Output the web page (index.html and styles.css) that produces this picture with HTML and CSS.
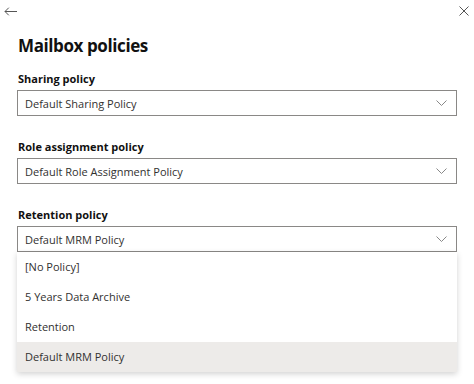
FILE: index.html
```html
<!DOCTYPE html>
<html lang="en">
<head>
  <meta charset="UTF-8">
  <meta name="viewport" content="width=device-width, initial-scale=1.0">
  <title>Mailbox policies</title>
  <link rel="stylesheet" href="styles.css">
</head>
<body>
  <div class="topbar">
    <button class="icon-btn back" title="Back">
      <svg width="13" height="9" viewBox="0 0 13 9"><path d="M13 4.5H1M4.8 0.7L1 4.5l3.8 3.8" fill="none" stroke="#555" stroke-width="1"/></svg>
    </button>
    <button class="icon-btn" title="Close">
      <svg width="10" height="10" viewBox="0 0 10 10"><path d="M0.5 0.5l9 9M9.5 0.5l-9 9" fill="none" stroke="#555" stroke-width="1"/></svg>
    </button>
  </div>

  <div class="panel">
    <h1>Mailbox policies</h1>

    <div class="field">
      <label>Sharing policy</label>
      <div class="dropdown">
        <span>Default Sharing Policy</span>
        <svg class="chevron" width="11" height="6" viewBox="0 0 11 6"><path d="M0.5 0.5l5 5 5-5" fill="none" stroke="#888" stroke-width="1"/></svg>
      </div>
    </div>

    <div class="field">
      <label>Role assignment policy</label>
      <div class="dropdown">
        <span>Default Role Assignment Policy</span>
        <svg class="chevron" width="11" height="6" viewBox="0 0 11 6"><path d="M0.5 0.5l5 5 5-5" fill="none" stroke="#888" stroke-width="1"/></svg>
      </div>
    </div>

    <div class="field">
      <label>Retention policy</label>
      <div class="dropdown">
        <span>Default MRM Policy</span>
        <svg class="chevron" width="11" height="6" viewBox="0 0 11 6"><path d="M0.5 0.5l5 5 5-5" fill="none" stroke="#888" stroke-width="1"/></svg>
      </div>
      <ul class="menu">
        <li>[No Policy]</li>
        <li>5 Years Data Archive</li>
        <li>Retention</li>
        <li class="selected">Default MRM Policy</li>
      </ul>
    </div>
  </div>
</body>
</html>
```

FILE: styles.css
```css
body {
  font-family: "Open Sans", Arial, sans-serif;
  background-color: #fff;
  color: #201f1e;
  margin: 0;
}

.topbar {
  display: flex;
  justify-content: space-between;
  align-items: flex-start;
  height: 24px;
  padding: 6px 5px 0 4px;
  box-sizing: border-box;
}

.icon-btn {
  display: flex;
  background: none;
  border: none;
  padding: 0;
  cursor: pointer;
}

.icon-btn.back {
  margin-top: 1px;
}

.panel {
  padding: 0 17px;
}

h1 {
  font-size: 17px;
  font-weight: 700;
  letter-spacing: -0.4px;
  margin: 10px 0 14px 1px;
  color: #111;
}

.field {
  margin-bottom: 23px;
}

.field label {
  display: block;
  font-size: 11px;
  font-weight: 700;
  margin: 0 0 4px 1px;
  color: #111;
}

.dropdown {
  display: flex;
  align-items: center;
  justify-content: space-between;
  height: 24px;
  border: 1px solid #8a8886;
  padding: 0 8px 0 7px;
  font-size: 11px;
  color: #323130;
}

.chevron {
  margin-right: 1px;
}

.menu {
  list-style: none;
  margin: 0;
  padding: 0;
  background: #fff;
  box-shadow: 0 2px 6px rgba(0, 0, 0, 0.18);
}

.menu li {
  height: 30px;
  line-height: 30px;
  padding: 0 8px;
  font-size: 11px;
  color: #323130;
}

.menu li.selected {
  background-color: #edebe9;
}
```
